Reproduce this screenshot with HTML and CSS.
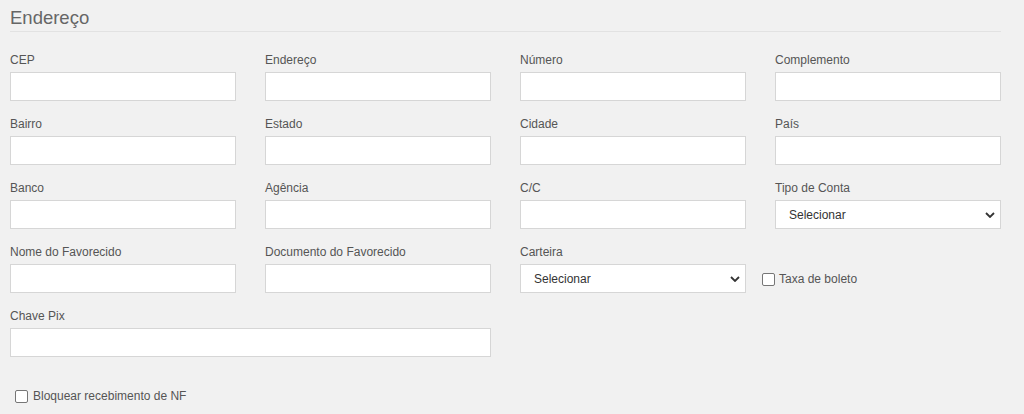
FILE: index.html
```html
<!DOCTYPE html>
<html lang="pt-BR">
<head>
<meta charset="utf-8">
<title>Endereço</title>
<link rel="stylesheet" href="styles.css">
</head>
<body>
<div class="page">
  <h2 class="section-title">Endereço</h2>
  <div class="form-grid">
    <div class="field"><label>CEP</label><input type="text"></div>
    <div class="field"><label>Endereço</label><input type="text"></div>
    <div class="field"><label>Número</label><input type="text"></div>
    <div class="field"><label>Complemento</label><input type="text"></div>

    <div class="field"><label>Bairro</label><input type="text"></div>
    <div class="field"><label>Estado</label><input type="text"></div>
    <div class="field"><label>Cidade</label><input type="text"></div>
    <div class="field"><label>País</label><input type="text"></div>

    <div class="field"><label>Banco</label><input type="text"></div>
    <div class="field"><label>Agência</label><input type="text"></div>
    <div class="field"><label>C/C</label><input type="text"></div>
    <div class="field"><label>Tipo de Conta</label>
      <div class="select-wrap">
        <select><option>Selecionar</option></select>
        <svg class="chev" width="10" height="6" viewBox="0 0 10 6"><path d="M1 1l4 4 4-4" fill="none" stroke="#333" stroke-width="1.8"/></svg>
      </div>
    </div>

    <div class="field"><label>Nome do Favorecido</label><input type="text"></div>
    <div class="field"><label>Documento do Favorecido</label><input type="text"></div>
    <div class="field"><label>Carteira</label>
      <div class="select-wrap">
        <select><option>Selecionar</option></select>
        <svg class="chev" width="10" height="6" viewBox="0 0 10 6"><path d="M1 1l4 4 4-4" fill="none" stroke="#333" stroke-width="1.8"/></svg>
      </div>
    </div>
    <div class="check check-inline"><span class="box"></span><span>Taxa de boleto</span></div>

    <div class="field span2"><label>Chave Pix</label><input type="text"></div>
  </div>
  <div class="check check-block"><span class="box"></span><span>Bloquear recebimento de NF</span></div>
</div>
</body>
</html>
```

FILE: styles.css
```css
* { box-sizing: border-box; }
html, body { margin: 0; padding: 0; }
body {
  background: #f1f1f1;
  font-family: "Liberation Sans", Arial, sans-serif;
  color: #555;
  width: 1024px;
  height: 414px;
  overflow: hidden;
}
.page {
  padding: 6px 23px 0 10px;
}
.section-title {
  margin: 0 0 19px 0;
  font-size: 18.5px;
  font-weight: 400;
  line-height: 24px;
  color: #666;
  padding-bottom: 1px;
  border-bottom: 1px solid #e2e2e2;
}
.form-grid {
  display: grid;
  grid-template-columns: repeat(4, 226px);
  column-gap: 29px;
  row-gap: 14px;
}
.field {
  display: flex;
  flex-direction: column;
}
.field label {
  font-size: 12px;
  line-height: 15px;
  padding-top: 2px;
  margin-bottom: 4px;
  color: #555;
}
.field input, .field select {
  height: 29px;
  width: 100%;
  border: 1px solid #d6d6d6;
  background: #fff;
  margin: 0;
  padding: 0 12px;
  font-family: inherit;
  font-size: 12px;
  color: #333;
  border-radius: 0;
  outline: none;
}
.span2 { grid-column: span 2; }
.select-wrap { position: relative; }
.select-wrap select {
  -webkit-appearance: none;
  appearance: none;
  padding-left: 13px;
}
.chev {
  position: absolute;
  right: 6px;
  top: 12px;
  pointer-events: none;
}
.check {
  display: flex;
  align-items: center;
  font-size: 12px;
  color: #555;
}
.box {
  width: 13px;
  height: 13px;
  border: 1px solid #767676;
  border-radius: 2px;
  background: #fff;
  flex: none;
}
.check-inline {
  align-self: end;
  height: 29px;
  margin-left: -13px;
  gap: 4px;
}
.check-inline .box { margin-top: 1px; }
.check-block {
  margin-top: 31px;
  margin-left: 5px;
  gap: 5px;
}
.check-block .box { margin-top: 2px; }
```
